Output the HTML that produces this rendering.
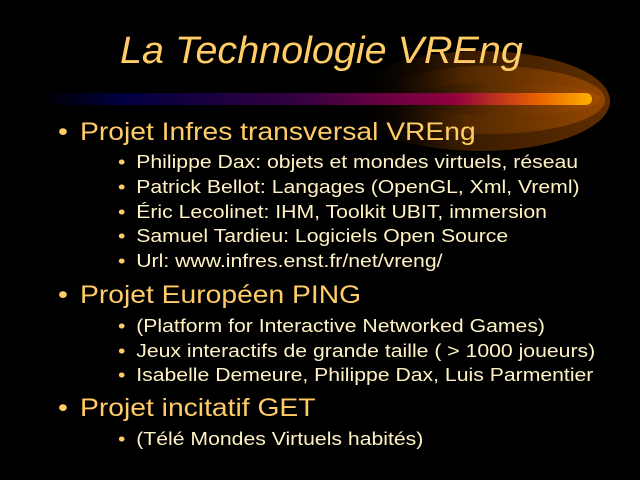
<!DOCTYPE html>
<html><head><meta charset="utf-8"><style>
body{margin:0;width:640px;height:480px;background:#000;overflow:hidden;position:relative;font-family:"Liberation Sans",sans-serif}
.t{position:absolute;white-space:nowrap;transform-origin:0 0}
.title{left:120px;top:30px;font-size:38px;font-style:italic;color:#FFCC66;transform:scaleX(1.04)}
.m{left:58px;font-size:25px;color:#FFCC66;transform:scaleX(1.13)}
.m b{font-weight:normal;display:inline-block;width:19.5px}
.s{left:118px;font-size:18.6px;color:#FFF2C4;transform:scaleX(1.14)}
.s b{font-weight:normal;display:inline-block;width:16px;color:#FFCC66}
</style></head><body>
<svg width="640" height="480" style="position:absolute;left:0;top:0">
<defs>
<linearGradient id="bar" x1="0" x2="1">
<stop offset="0" stop-color="#000"/>
<stop offset="0.15" stop-color="#000040"/>
<stop offset="0.45" stop-color="#300040"/>
<stop offset="0.75" stop-color="#900040"/>
<stop offset="0.9" stop-color="#e86000"/>
<stop offset="1" stop-color="#ffb000"/>
</linearGradient>
<linearGradient id="glow" x1="0" x2="1">
<stop offset="0" stop-color="#000" stop-opacity="0"/>
<stop offset="0.4" stop-color="#5a2c00"/>
<stop offset="1" stop-color="#a04c00"/>
</linearGradient>
</defs>
<ellipse cx="480" cy="101" rx="130" ry="50" fill="url(#glow)" opacity="0.6"/>
<ellipse cx="490" cy="100" rx="115" ry="34" fill="url(#glow)" opacity="0.8"/>
<ellipse cx="505" cy="99" rx="95" ry="17" fill="url(#glow)"/>
<rect x="40" y="93" width="552" height="12" rx="6" fill="url(#bar)"/>
</svg>
<div class="t title">La Technologie VREng</div>
<div class="t m" style="top:118px"><b>•</b>Projet Infres transversal VREng</div>
<div class="t s" style="top:151px"><b>•</b>Philippe Dax: objets et mondes virtuels, réseau</div>
<div class="t s" style="top:176px"><b>•</b>Patrick Bellot: Langages (OpenGL, Xml, Vreml)</div>
<div class="t s" style="top:201px"><b>•</b>Éric Lecolinet: IHM, Toolkit UBIT, immersion</div>
<div class="t s" style="top:225px"><b>•</b>Samuel Tardieu: Logiciels Open Source</div>
<div class="t s" style="top:250px"><b>•</b>Url: www.infres.enst.fr/net/vreng/</div>
<div class="t m" style="top:281px"><b>•</b>Projet Européen PING</div>
<div class="t s" style="top:315px"><b>•</b>(Platform for Interactive Networked Games)</div>
<div class="t s" style="top:340px"><b>•</b>Jeux interactifs de grande taille ( &gt; 1000 joueurs)</div>
<div class="t s" style="top:364px"><b>•</b>Isabelle Demeure, Philippe Dax, Luis Parmentier</div>
<div class="t m" style="top:394px"><b>•</b>Projet incitatif GET</div>
<div class="t s" style="top:428px"><b>•</b>(Télé Mondes Virtuels habités)</div>
</body></html>
